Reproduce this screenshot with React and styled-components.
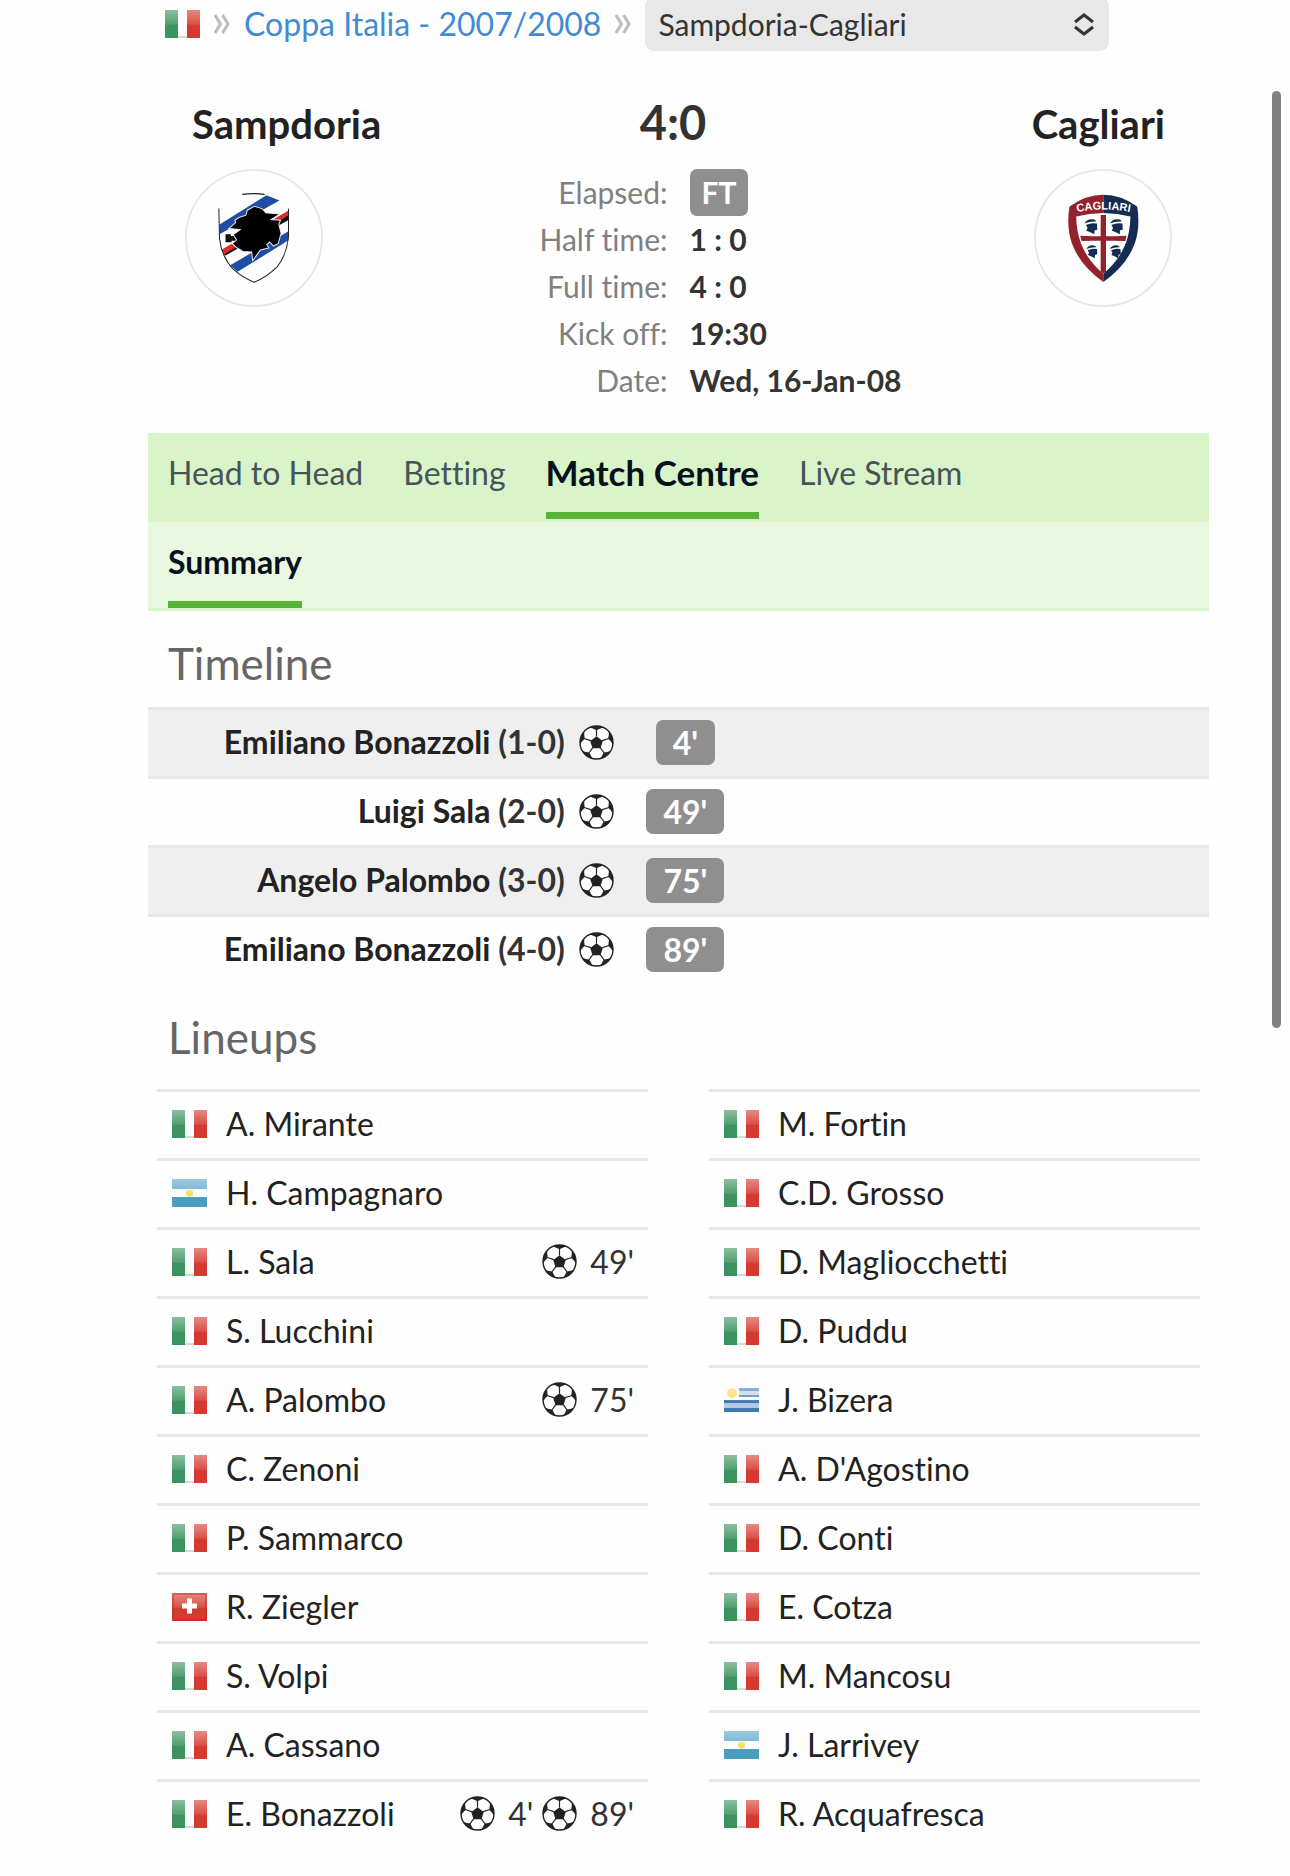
import { useState } from 'react'
import styled, { createGlobalStyle } from 'styled-components'

const GlobalStyle = createGlobalStyle`
  * {
    box-sizing: border-box;
  }

  body {
    margin: 0;
    background: #fefefe;
    color: #222222;
    font-family: Lato, "Liberation Sans", sans-serif;
    font-size: 32px;
    font-variant-ligatures: none;
    line-height: 36px;
  }

  ul,
  dl,
  dd,
  h1,
  h2 {
    margin: 0;
    padding: 0;
    font-weight: 400;
  }

  ul {
    list-style: none;
  }

  a {
    text-decoration: none;
  }

  svg {
    display: block;
    flex: none;
  }
`

const timeline = [
  { player: 'Emiliano Bonazzoli', score: '(1-0)', minute: "4'" },
  { player: 'Luigi Sala', score: '(2-0)', minute: "49'" },
  { player: 'Angelo Palombo', score: '(3-0)', minute: "75'" },
  { player: 'Emiliano Bonazzoli', score: '(4-0)', minute: "89'" },
]

const homeLineup = [
  { name: 'A. Mirante', country: 'italy' },
  { name: 'H. Campagnaro', country: 'argentina' },
  { name: 'L. Sala', country: 'italy', goals: ["49'"] },
  { name: 'S. Lucchini', country: 'italy' },
  { name: 'A. Palombo', country: 'italy', goals: ["75'"] },
  { name: 'C. Zenoni', country: 'italy' },
  { name: 'P. Sammarco', country: 'italy' },
  { name: 'R. Ziegler', country: 'switzerland' },
  { name: 'S. Volpi', country: 'italy' },
  { name: 'A. Cassano', country: 'italy' },
  { name: 'E. Bonazzoli', country: 'italy', goals: ["4'", "89'"] },
]

const awayLineup = [
  { name: 'M. Fortin', country: 'italy' },
  { name: 'C.D. Grosso', country: 'italy' },
  { name: 'D. Magliocchetti', country: 'italy' },
  { name: 'D. Puddu', country: 'italy' },
  { name: 'J. Bizera', country: 'uruguay' },
  { name: "A. D'Agostino", country: 'italy' },
  { name: 'D. Conti', country: 'italy' },
  { name: 'E. Cotza', country: 'italy' },
  { name: 'M. Mancosu', country: 'italy' },
  { name: 'J. Larrivey', country: 'argentina' },
  { name: 'R. Acquafresca', country: 'italy' },
]

const flags = {
  italy: (
    <>
      <rect width="35" height="28" fill="#fdfdfd" />
      <rect width="13" height="28" fill="#3d9360" />
      <rect x="22" width="13" height="28" fill="#d53a31" />
      <rect x="13" y="26" width="9" height="2" fill="#d8d8d8" />
    </>
  ),
  argentina: (
    <>
      <rect width="35" height="28" fill="#fdfdfd" />
      <rect width="35" height="10" fill="#5da9cc" />
      <rect y="18" width="35" height="10" fill="#4b9dc0" />
      <circle cx="17.5" cy="14" r="3.5" fill="#f3dc5e" />
    </>
  ),
  switzerland: (
    <>
      <rect width="35" height="28" fill="#d53a31" />
      <path d="M15 5.500h5v5h5v5h-5v5h-5v-5h-5v-5h5z" fill="#ffffff" />
    </>
  ),
  uruguay: (
    <>
      <rect y="2" width="35" height="24" fill="#fdfdfd" />
      <path d="M15 2h20v3h-20zM15 9h20v2h-20z" fill="#5288bd" />
      <path d="M15 5h20v4h-20z" fill="#c3d5ea" />
      <path d="M0 14h35v3h-35zM0 22h35v4h-35z" fill="#3f78b3" />
      <path d="M0 17h35v5h-35z" fill="#b4cae4" />
      <circle cx="8" cy="7" r="5" fill="#f6dd68" />
    </>
  ),
}

function Flag({ country }) {
  return (
    <svg width="35" height="28" viewBox="0 0 35 28" role="img" aria-label={country}>
      <defs>
        <linearGradient id="gloss" x1="0" y1="0" x2="0" y2="1">
          <stop offset="0" stopColor="#ffffff" stopOpacity="0.4" />
          <stop offset="0.5" stopColor="#ffffff" stopOpacity="0.12" />
          <stop offset="0.55" stopColor="#ffffff" stopOpacity="0" />
        </linearGradient>
      </defs>
      {flags[country]}
      <rect width="35" height="28" fill="url(#gloss)" />
      {country === 'switzerland' && (
        <rect x="1" y="1" width="33" height="26" fill="none" stroke="#b32820" strokeOpacity="0.4" strokeWidth="2" />
      )}
    </svg>
  )
}

function Ball() {
  return (
    <svg width="35" height="35" viewBox="-17.5 -17.5 35 35" role="img" aria-label="Goal">
      <circle r="16.5" fill="#ffffff" stroke="#222222" strokeWidth="1.400" />
      <path d="M0 -6.200L6.300 -1.600L3.900 5.800H-3.900L-6.300 -1.600Z" fill="#222222" />
      {[0, 72, 144, 216, 288].map((angle) => (
        <g key={angle} transform={`rotate(${angle})`}>
          <path d="M0 -6V-13" stroke="#222222" strokeWidth="1.200" />
          <path d="M-6.700 -15.100A16.500 16.500 0 0 1 6.700 -15.100Q3 -14.200 0 -12.300Q-3 -14.200 -6.700 -15.100Z" fill="#222222" />
        </g>
      ))}
    </svg>
  )
}

function SampdoriaCrest() {
  return (
    <svg width="138" height="138" viewBox="47 238 412 412" role="img" aria-label="Sampdoria crest">
      <circle cx="253" cy="444" r="203" fill="#fefefe" stroke="#e5e5e9" strokeWidth="5" />
      <path d="M150 404L290 316L329 332L150 433Z" fill="#1d4da5" />
      <path d="M156 479L356 362V388L166 495Z" fill="#e02c2b" />
      <path d="M163 493L356 376V390L168 496Z" fill="#111111" />
      <path d="M182 525L356 424V451L204 545Z" fill="#1d4da5" />
      <path d="M168 433h16v5h18v14h-16v5h-18z" fill="#111111" />
      <path
        d="M178 416L198 398L196 391L208 383L229 376L233 361L255 349L278 357L288 369L331 372L304 389L332 391L327 403L334 430L325 461L311 468L300 456L291 464L298 474L272 480L249 512L246 486L220 484L203 474L188 461L201 450L191 434L212 419Z"
        fill="#000000"
        stroke="#e8ebf0"
        strokeWidth="3"
      />
      <path d="M218 314Q253 309 285 314" fill="none" stroke="#222222" strokeWidth="4" />
      <path d="M148 356L150 445Q156 500 190 536Q216 560 253 576Q292 560 322 530Q350 496 356 440V357" fill="none" stroke="#222222" strokeWidth="3" />
    </svg>
  )
}

function CagliariCrest() {
  const moors = [
    [252, 388, 1],
    [328, 388, 1],
    [258, 466, 0.85],
    [328, 466, 0.85],
  ]
  return (
    <svg width="138" height="138" viewBox="103 238 412 412" role="img" aria-label="Cagliari crest">
      <circle cx="309" cy="444" r="203" fill="#fefefe" stroke="#e5e5e9" strokeWidth="5" />
      <path d="M310 315Q258 315 209 350Q199 410 216 460Q240 526 310 575Z" fill="#93222d" />
      <path d="M310 315Q362 315 411 350Q421 410 404 460Q380 526 310 575Z" fill="#142b52" />
      <path d="M310 369Q268 370 229 380Q230 424 243 460Q262 510 310 551Q358 510 377 460Q390 424 391 380Q352 370 310 369Z" fill="#ffffff" />
      <path d="M302 375h16v170l-8 5l-8 -5zM241 437Q310 441 379 437L376 453Q310 450 245 453Z" fill="#93222d" />
      {moors.map(([x, y, scale]) => (
        <g key={`${x}-${y}`} transform={`translate(${x} ${y}) scale(${scale})`} fill="#142b52">
          <path d="M2 13Q10 -4 32 1L37 7Q18 6 2 13Z" />
          <path d="M6 17Q22 9 39 13L40 31L32 33L31 45L16 37L7 34L11 26Z" />
        </g>
      ))}
      <path id="crest-arc" d="M230 367Q310 351 391 367" fill="none" />
      <text fill="#ffffff" fontFamily="Liberation Sans, sans-serif" fontSize="33" fontWeight="700" textAnchor="middle">
        <textPath href="#crest-arc" startOffset="50%">CAGLIARI</textPath>
      </text>
    </svg>
  )
}

function Separator() {
  return (
    <svg width="16" height="20" viewBox="0 0 16 20" fill="none" stroke="#b9bbbf" strokeWidth="3" aria-hidden="true">
      <path d="M1 1l5.500 9l-5.500 9M8.500 1l5.500 9l-5.500 9" />
    </svg>
  )
}

const Page = styled.main`
  padding: 0 81px 20px 148px;
`

const Breadcrumb = styled.nav`
  display: flex;
  align-items: center;
  gap: 14px;
  height: 50px;
  padding: 0 17px 3px;
`

const CrumbLink = styled.a`
  color: #428bd2;
  white-space: nowrap;
`

const SelectBox = styled.div`
  position: relative;
  flex: 0 1 464px;

  svg {
    position: absolute;
    top: 16px;
    right: 15px;
    pointer-events: none;
  }
`

const MatchSelect = styled.select`
  display: block;
  width: 100%;
  height: 54px;
  padding: 0 40px 0 13px;
  appearance: none;
  border: 0;
  border-radius: 9px;
  background: #e8e8e8;
  color: #333333;
  font: inherit;
  font-size: 30px;
`

const MatchHeader = styled.header`
  display: flex;
  justify-content: space-between;
  padding: 52px 37px 0;
  height: 383px;
`

const Team = styled.section`
  display: flex;
  flex-direction: column;
  align-items: ${(props) => (props.$away ? 'flex-end' : 'flex-start')};
  gap: 23px;
  width: 200px;
`

const TeamName = styled.h2`
  padding: 0 7px;
  font-size: 40px;
  font-weight: 700;
  line-height: 44px;
`

const Result = styled.section`
  flex: 1;
`

const Score = styled.h1`
  padding-right: 11px;
  color: #333333;
  font-size: 47px;
  font-weight: 700;
  line-height: 40px;
  text-align: center;
`

const Facts = styled.dl`
  display: grid;
  grid-template-columns: 1fr 1fr;
  grid-auto-rows: 47px;
  column-gap: 22px;
  margin-top: 27px;
  font-size: 30px;
  line-height: 46px;

  dt {
    color: #808080;
    text-align: right;
  }

  dd {
    color: #333333;
    font-weight: 700;
    white-space: nowrap;
  }
`

const Badge = styled.span`
  display: inline-block;
  padding: 0 ${(props) => (props.$small ? 12 : 17)}px;
  border-radius: 7px;
  background: #8f8f8f;
  color: #ffffff;
  font-weight: 700;
  line-height: ${(props) => (props.$small ? 47 : 45)}px;
`

const TabBar = styled.nav`
  display: flex;
  gap: 40px;
  height: 89px;
  padding: 0 20px;
  border-bottom: 3px solid #d9f4c8;
  background: ${(props) => (props.$secondary ? '#eaf8e2' : '#d9f4c8')};
`

const Tab = styled.a`
  padding-top: 22px;
  border-bottom: 7px solid ${(props) => (props.$active ? '#59b336' : 'transparent')};
  color: ${(props) => (props.$active ? '#06111d' : '#46545a')};
  font-size: ${(props) => (props.$large ? 35 : 32)}px;
  font-weight: ${(props) => (props.$active ? 700 : 400)};
  line-height: ${(props) => (props.$large ? 34 : 36)}px;
  white-space: nowrap;
`

const SectionTitle = styled.h2`
  padding: 26px 20px 18px;
  color: #666666;
  font-size: 44px;
  line-height: 52px;
`

const TimelineList = styled.ul`
  padding-bottom: 2px;
`

const TimelineRow = styled.li`
  display: grid;
  grid-template-columns: 44% 141px 1fr;
  align-items: center;
  height: 69px;
  padding-bottom: 2px;
  border-top: 3px solid #e8e8e8;

  &:nth-child(odd) {
    background: #efefef;
  }
`

const Scorer = styled.div`
  display: flex;
  align-items: center;
  justify-content: flex-end;
  gap: 14px;
  padding-right: 1px;
  font-weight: 700;

  span {
    color: #333333;
  }
`

const Minute = styled.div`
  text-align: center;
`

const Columns = styled.div`
  display: grid;
  grid-template-columns: 1fr 1fr;
  gap: 61px;
  margin-top: 8px;
  padding: 0 9px;
`

const PlayerRow = styled.li`
  display: flex;
  align-items: center;
  gap: 19px;
  height: 69px;
  padding: 0 14px 3px 15px;
  border-top: 3px solid #e8e8e8;
`

const Goals = styled.div`
  display: flex;
  gap: 9px;
  margin-left: auto;
  color: #333333;
`

const Goal = styled.span`
  display: flex;
  align-items: center;
  gap: 13px;
`

const ScrollThumb = styled.div`
  position: absolute;
  top: 91px;
  right: 9px;
  width: 9px;
  height: 937px;
  border-radius: 5px;
  background: #808080;
`

function Lineup({ players }) {
  return (
    <ul>
      {players.map(({ name, country, goals = [] }) => (
        <PlayerRow key={name}>
          <Flag country={country} />
          {name}
          <Goals>
            {goals.map((minute) => (
              <Goal key={minute}>
                <Ball />
                {minute}
              </Goal>
            ))}
          </Goals>
        </PlayerRow>
      ))}
    </ul>
  )
}

function App() {
  const [match, setMatch] = useState('Sampdoria-Cagliari')

  return (
    <>
      <GlobalStyle />
      <Page>
        <Breadcrumb>
          <Flag country="italy" />
          <Separator />
          <CrumbLink href="#competition">Coppa Italia - 2007/2008</CrumbLink>
          <Separator />
          <SelectBox>
            <MatchSelect aria-label="Match" value={match} onChange={(e) => setMatch(e.target.value)}>
              <option>Sampdoria-Cagliari</option>
            </MatchSelect>
            <svg width="20" height="23" viewBox="0 0 20 23" fill="none" stroke="#333333" strokeWidth="3" aria-hidden="true">
              <path d="M1 9l9-7l9 7M1 14l9 7l9-7" />
            </svg>
          </SelectBox>
        </Breadcrumb>

        <MatchHeader>
          <Team>
            <TeamName>Sampdoria</TeamName>
            <SampdoriaCrest />
          </Team>
          <Result>
            <Score>4:0</Score>
            <Facts>
              <dt>Elapsed:</dt>
              <dd>
                <Badge $small>FT</Badge>
              </dd>
              <dt>Half time:</dt>
              <dd>1 : 0</dd>
              <dt>Full time:</dt>
              <dd>4 : 0</dd>
              <dt>Kick off:</dt>
              <dd>19:30</dd>
              <dt>Date:</dt>
              <dd>Wed, 16-Jan-08</dd>
            </Facts>
          </Result>
          <Team $away>
            <TeamName>Cagliari</TeamName>
            <CagliariCrest />
          </Team>
        </MatchHeader>

        <TabBar>
          <Tab href="#head-to-head">Head to Head</Tab>
          <Tab href="#betting">Betting</Tab>
          <Tab href="#match-centre" $active $large>Match Centre</Tab>
          <Tab href="#live-stream">Live Stream</Tab>
        </TabBar>
        <TabBar $secondary>
          <Tab href="#summary" $active>Summary</Tab>
        </TabBar>

        <SectionTitle>Timeline</SectionTitle>
        <TimelineList>
          {timeline.map(({ player, score, minute }) => (
            <TimelineRow key={minute}>
              <Scorer>
                <div>
                  {player} <span>{score}</span>
                </div>
                <Ball />
              </Scorer>
              <Minute>
                <Badge>{minute}</Badge>
              </Minute>
            </TimelineRow>
          ))}
        </TimelineList>

        <SectionTitle>Lineups</SectionTitle>
        <Columns>
          <Lineup players={homeLineup} />
          <Lineup players={awayLineup} />
        </Columns>
      </Page>
      <ScrollThumb />
    </>
  )
}

export default App
